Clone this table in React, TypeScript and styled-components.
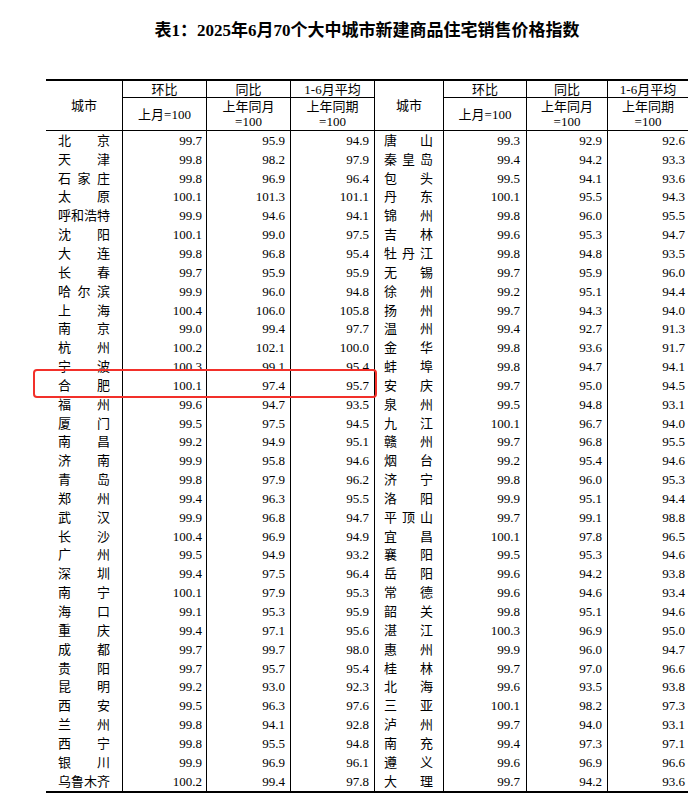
import React from "react";
import styled, { createGlobalStyle } from "styled-components";

const GlobalStyle = createGlobalStyle`
  html, body { margin: 0; padding: 0; background: #fff; }
  body { font-family: "Liberation Serif", "Noto Sans CJK SC", serif; color: #000; }
`;

type Row = [string, string, string, string];

const left: Row[] = [
  ["北京", "99.7", "95.9", "94.9"],
  ["天津", "99.8", "98.2", "97.9"],
  ["石家庄", "99.8", "96.9", "96.4"],
  ["太原", "100.1", "101.3", "101.1"],
  ["呼和浩特", "99.9", "94.6", "94.1"],
  ["沈阳", "100.1", "99.0", "97.5"],
  ["大连", "99.8", "96.8", "95.4"],
  ["长春", "99.7", "95.9", "95.9"],
  ["哈尔滨", "99.9", "96.0", "94.8"],
  ["上海", "100.4", "106.0", "105.8"],
  ["南京", "99.0", "99.4", "97.7"],
  ["杭州", "100.2", "102.1", "100.0"],
  ["宁波", "100.3", "99.1", "95.4"],
  ["合肥", "100.1", "97.4", "95.7"],
  ["福州", "99.6", "94.7", "93.5"],
  ["厦门", "99.5", "97.5", "94.5"],
  ["南昌", "99.2", "94.9", "95.1"],
  ["济南", "99.9", "95.8", "94.6"],
  ["青岛", "99.8", "97.9", "96.2"],
  ["郑州", "99.4", "96.3", "95.5"],
  ["武汉", "99.9", "96.8", "94.7"],
  ["长沙", "100.4", "96.9", "94.9"],
  ["广州", "99.5", "94.9", "93.2"],
  ["深圳", "99.4", "97.5", "96.4"],
  ["南宁", "100.1", "97.9", "95.3"],
  ["海口", "99.1", "95.3", "95.9"],
  ["重庆", "99.4", "97.1", "95.6"],
  ["成都", "99.7", "99.7", "98.0"],
  ["贵阳", "99.7", "95.7", "95.4"],
  ["昆明", "99.2", "93.0", "92.3"],
  ["西安", "99.5", "96.3", "97.6"],
  ["兰州", "99.8", "94.1", "92.8"],
  ["西宁", "99.8", "95.5", "94.8"],
  ["银川", "99.9", "96.9", "96.1"],
  ["乌鲁木齐", "100.2", "99.4", "97.8"],
];

const right: Row[] = [
  ["唐山", "99.3", "92.9", "92.6"],
  ["秦皇岛", "99.4", "94.2", "93.3"],
  ["包头", "99.5", "94.1", "93.6"],
  ["丹东", "100.1", "95.5", "94.3"],
  ["锦州", "99.8", "96.0", "95.5"],
  ["吉林", "99.6", "95.3", "94.7"],
  ["牡丹江", "99.8", "94.8", "93.5"],
  ["无锡", "99.7", "95.9", "96.0"],
  ["徐州", "99.2", "95.1", "94.4"],
  ["扬州", "99.7", "94.3", "94.0"],
  ["温州", "99.4", "92.7", "91.3"],
  ["金华", "99.8", "93.6", "91.7"],
  ["蚌埠", "99.8", "94.7", "94.1"],
  ["安庆", "99.7", "95.0", "94.5"],
  ["泉州", "99.5", "94.8", "93.1"],
  ["九江", "100.1", "96.7", "94.0"],
  ["赣州", "99.7", "96.8", "95.5"],
  ["烟台", "99.2", "95.4", "94.6"],
  ["济宁", "99.8", "96.0", "95.3"],
  ["洛阳", "99.9", "95.1", "94.4"],
  ["平顶山", "99.7", "99.1", "98.8"],
  ["宜昌", "100.1", "97.8", "96.5"],
  ["襄阳", "99.5", "95.3", "94.6"],
  ["岳阳", "99.6", "94.2", "93.8"],
  ["常德", "99.6", "94.6", "93.4"],
  ["韶关", "99.8", "95.1", "94.6"],
  ["湛江", "100.3", "96.9", "95.0"],
  ["惠州", "99.9", "96.0", "94.7"],
  ["桂林", "99.7", "97.0", "96.6"],
  ["北海", "99.6", "93.5", "93.8"],
  ["三亚", "100.1", "98.2", "97.3"],
  ["泸州", "99.7", "94.0", "93.1"],
  ["南充", "99.4", "97.3", "97.1"],
  ["遵义", "99.6", "96.9", "96.6"],
  ["大理", "99.7", "94.2", "93.6"],
];

const COLS = "76px 84px 84px 84px 69px 83px 81px 81px";
const ROW_H = 660 / 35;
const HIGHLIGHT_ROW = 13;

const Page = styled.div`
  padding: 21px 0 0 46px;
  width: 642px;
`;

const Title = styled.h1`
  margin: 0;
  height: 20px;
  line-height: 20px;
  font-size: 17px;
  font-weight: 700;
  text-align: center;
  font-family: "Liberation Serif", "Noto Sans CJK SC", serif;
`;

const TableWrap = styled.div`
  position: relative;
  margin-top: 38px;
  border-top: 2px solid #000;
  border-bottom: 2px solid #000;
  font-size: 13px;
`;

const Head = styled.div`
  display: grid;
  grid-template-columns: ${COLS};
  grid-template-rows: 17px 32px;
  border-bottom: 1px solid #000;
`;

const HeadCell = styled.div<{ $col: number; $kind: "city" | "top" | "sub"; $first?: boolean }>`
  display: flex;
  flex-direction: column;
  align-items: center;
  justify-content: center;
  text-align: center;
  line-height: 15px;
  grid-column: ${(p) => p.$col};
  grid-row: ${(p) => (p.$kind === "city" ? "1 / span 2" : p.$kind === "top" ? "1" : "2")};
  border-left: ${(p) => (p.$first ? "none" : "1px solid #000")};
  border-bottom: ${(p) => (p.$kind === "top" ? "1px solid #000" : "none")};
  padding-top: ${(p) => (p.$kind === "top" ? "1px" : "0")};
`;

const Body = styled.div`
  display: grid;
  grid-template-columns: ${COLS};
  grid-auto-rows: ${ROW_H}px;
`;

const CityCell = styled.div<{ $side: "l" | "r" }>`
  display: flex;
  justify-content: space-between;
  align-items: center;
  padding: ${(p) => (p.$side === "l" ? "0 12px" : "0 10px 0 9px")};
  border-left: ${(p) => (p.$side === "l" ? "none" : "1px solid #000")};
  line-height: 1;
`;

const NumCell = styled.div<{ $pad: number }>`
  display: flex;
  align-items: center;
  justify-content: flex-end;
  padding-right: ${(p) => p.$pad}px;
  border-left: 1px solid #000;
  line-height: 1;
`;

const Highlight = styled.div<{ $row: number }>`
  position: absolute;
  left: -13px;
  top: ${(p) => 2 + 50 + p.$row * ROW_H - 9}px;
  width: 344px;
  height: 29px;
  box-sizing: border-box;
  border: 2.5px solid #f2302a;
  border-radius: 4px;
  pointer-events: none;
`;

const City = ({ name, side }: { name: string; side: "l" | "r" }) => (
  <CityCell $side={side}>
    {Array.from(name).map((c, i) => (
      <span key={i}>{c}</span>
    ))}
  </CityCell>
);

const HeaderHalf = ({ offset }: { offset: number }) => (
  <>
    <HeadCell $col={offset + 1} $kind="city" $first={offset === 0}>
      城市
    </HeadCell>
    <HeadCell $col={offset + 2} $kind="top">环比</HeadCell>
    <HeadCell $col={offset + 3} $kind="top">同比</HeadCell>
    <HeadCell $col={offset + 4} $kind="top">1-6月平均</HeadCell>
    <HeadCell $col={offset + 2} $kind="sub">上月=100</HeadCell>
    <HeadCell $col={offset + 3} $kind="sub">
      <span>上年同月</span>
      <span>=100</span>
    </HeadCell>
    <HeadCell $col={offset + 4} $kind="sub">
      <span>上年同期</span>
      <span>=100</span>
    </HeadCell>
  </>
);

export default function App() {
  return (
    <>
      <GlobalStyle />
      <Page>
        <Title>表1：2025年6月70个大中城市新建商品住宅销售价格指数</Title>
        <TableWrap>
          <Head>
            <HeaderHalf offset={0} />
            <HeaderHalf offset={4} />
          </Head>
          <Body>
            {left.map((l, i) => {
              const r = right[i];
              return (
                <React.Fragment key={i}>
                  <City name={l[0]} side="l" />
                  <NumCell $pad={4}>{l[1]}</NumCell>
                  <NumCell $pad={5}>{l[2]}</NumCell>
                  <NumCell $pad={5}>{l[3]}</NumCell>
                  <City name={r[0]} side="r" />
                  <NumCell $pad={6}>{r[1]}</NumCell>
                  <NumCell $pad={5}>{r[2]}</NumCell>
                  <NumCell $pad={3}>{r[3]}</NumCell>
                </React.Fragment>
              );
            })}
          </Body>
          <Highlight $row={HIGHLIGHT_ROW} />
        </TableWrap>
      </Page>
    </>
  );
}
